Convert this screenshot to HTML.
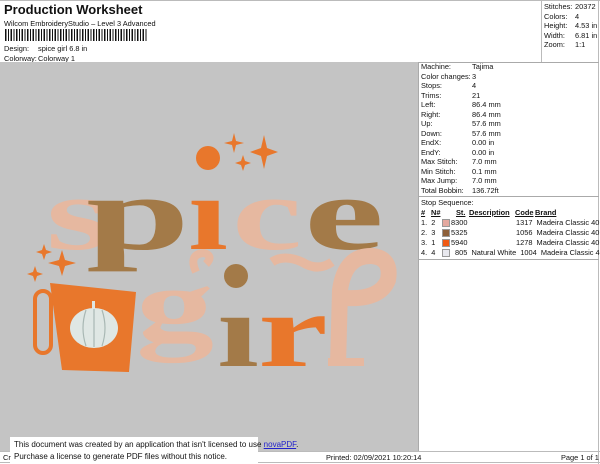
<!DOCTYPE html>
<html><head><style>
body{margin:0;width:600px;height:464px;overflow:hidden;background:#fff;font-family:"Liberation Sans",Arial,sans-serif;position:relative;color:#111}
.a{position:absolute;white-space:nowrap}
.s{font-size:7.4px}
.t{position:absolute;font-size:7.4px;line-height:9.5px;white-space:nowrap}
</style></head><body>
<div class="a" style="left:4px;top:2px;font-size:13px;font-weight:bold">Production Worksheet</div>
<div class="a s" style="left:4px;top:19px">Wilcom EmbroideryStudio – Level 3 Advanced</div>
<div class="a" style="left:5px;top:29px;width:142px;height:12px;background:repeating-linear-gradient(90deg,#111 0 1.5px,#fff 1.5px 3px,#111 3px 4px,#fff 4px 5.5px)"></div>
<div class="a s" style="left:4px;top:44px">Design:</div><div class="a s" style="left:38px;top:44px">spice girl 6.8 in</div>
<div class="a s" style="left:4px;top:54px">Colorway:</div><div class="a s" style="left:38px;top:54px">Colorway 1</div>
<div class="a" style="left:0;top:0;width:600px;height:1px;background:#bbb"></div>
<div class="a" style="left:598px;top:0;width:1px;height:464px;background:#bbb"></div>
<div class="a" style="left:541px;top:0;width:1px;height:62px;background:#bbb"></div>
<div class="a" style="left:0;top:62px;width:418px;height:389px;background:#c4c4c4"></div>
<div class="a" style="left:418px;top:62px;width:1px;height:389px;background:#aaa"></div>
<div class="a" style="left:418px;top:62px;width:181px;height:1px;background:#aaa"></div>
<div class="a" style="left:418px;top:196px;width:181px;height:1px;background:#aaa"></div>
<div class="a" style="left:418px;top:259px;width:181px;height:1px;background:#aaa"></div>
<div class="a" style="left:0;top:451px;width:600px;height:1px;background:#bbb"></div>
<div class="a" style="left:0;top:462px;width:600px;height:1px;background:#bbb"></div>

<div class="t" style="left:544px;top:2px">Stitches:<br>Colors:<br>Height:<br>Width:<br>Zoom:</div>
<div class="t" style="left:575px;top:2px">20372<br>4<br>4.53 in<br>6.81 in<br>1:1</div>

<div class="t" style="left:421px;top:62px">Machine:<br>Color changes:<br>Stops:<br>Trims:<br>Left:<br>Right:<br>Up:<br>Down:<br>EndX:<br>EndY:<br>Max Stitch:<br>Min Stitch:<br>Max Jump:<br>Total Bobbin:</div>
<div class="t" style="left:472px;top:62px">Tajima<br>3<br>4<br>21<br>86.4 mm<br>86.4 mm<br>57.6 mm<br>57.6 mm<br>0.00 in<br>0.00 in<br>7.0 mm<br>0.1 mm<br>7.0 mm<br>136.72ft</div>

<div class="a s" style="left:421px;top:198px">Stop Sequence:</div>
<div class="a s" style="left:421px;top:208px;font-weight:bold;text-decoration:underline">#</div>
<div class="a s" style="left:431px;top:208px;font-weight:bold;text-decoration:underline">N#</div>
<div class="a s" style="left:456px;top:208px;font-weight:bold;text-decoration:underline">St.</div>
<div class="a s" style="left:469px;top:208px;font-weight:bold;text-decoration:underline">Description</div>
<div class="a s" style="left:515px;top:208px;font-weight:bold;text-decoration:underline">Code</div>
<div class="a s" style="left:535px;top:208px;font-weight:bold;text-decoration:underline">Brand</div>
<div class="a s" style="left:421px;top:218px">1.&nbsp; 2</div><div class="a" style="left:442px;top:219px;width:6px;height:6px;background:#e4a9a0;border:1px solid #999"></div><div class="a s" style="left:451px;top:218px">8300</div><div class="a s" style="left:516px;top:218px">1317&nbsp; Madeira Classic 40</div>
<div class="a s" style="left:421px;top:228px">2.&nbsp; 3</div><div class="a" style="left:442px;top:229px;width:6px;height:6px;background:#8c5f3a;border:1px solid #999"></div><div class="a s" style="left:451px;top:228px">5325</div><div class="a s" style="left:516px;top:228px">1056&nbsp; Madeira Classic 40</div>
<div class="a s" style="left:421px;top:238px">3.&nbsp; 1</div><div class="a" style="left:442px;top:239px;width:6px;height:6px;background:#f05a14;border:1px solid #999"></div><div class="a s" style="left:451px;top:238px">5940</div><div class="a s" style="left:516px;top:238px">1278&nbsp; Madeira Classic 40</div>
<div class="a s" style="left:421px;top:248px">4.&nbsp; 4</div><div class="a" style="left:442px;top:249px;width:6px;height:6px;background:#e8e8ee;border:1px solid #999"></div><div class="a s" style="left:455px;top:248px">805&nbsp; Natural White&nbsp; 1004&nbsp; Madeira Classic 40</div>

<svg class="a" style="left:0;top:62px" width="418" height="389" viewBox="0 62 418 389">
<g fill="#e8772c">
<path d="M234 133 l2 8 8 2 -8 2 -2 8 -2 -8 -8 -2 8 -2z"/>
<path d="M264 135 l3 13 11 4 -11 4 -3 13 -3 -13 -11 -4 11 -4z"/>
<path d="M243 155 l2 6 6 2 -6 2 -2 6 -2 -6 -6 -2 6 -2z"/>
<path d="M44 244 l2 6 6 2 -6 2 -2 6 -2 -6 -6 -2 6 -2z"/>
<path d="M62 250 l3 10 11 3 -11 3 -3 10 -3 -10 -11 -3 11 -3z"/>
<path d="M35 266 l2 6 6 2 -6 2 -2 6 -2 -6 -6 -2 6 -2z"/>
<circle cx="208" cy="158" r="12"/>
<rect x="35" y="291" width="16" height="62" rx="8" fill="none" stroke="#e8772c" stroke-width="4"/>
<path d="M50 283 L136 292 L129 372 L62 370 Z"/>
</g>
<ellipse cx="94" cy="328" rx="24" ry="20" fill="#dfe7e4"/>
<g stroke="#a9b8b4" stroke-width="1.2" fill="none"><path d="M86 310 Q80 328 86 346"/><path d="M102 310 Q108 328 102 346"/><path d="M94 309 V347"/></g>
<rect x="92" y="301" width="3" height="8" fill="#dfe7e4"/>
<circle cx="236" cy="276" r="12" fill="#a37a48"/>
<g font-family="Liberation Serif,serif" font-weight="bold">
<text x="46" y="249" font-size="105" fill="#e6b8a0" textLength="64" lengthAdjust="spacingAndGlyphs">s</text>
<text x="86" y="249" font-size="105" fill="#a37a48" textLength="104" lengthAdjust="spacingAndGlyphs">p</text>
<text x="188" y="249" font-size="105" fill="#e8772c" textLength="40" lengthAdjust="spacingAndGlyphs">ı</text>
<text x="232" y="249" font-size="105" fill="#e6b8a0" textLength="70" lengthAdjust="spacingAndGlyphs">c</text>
<text x="304" y="249" font-size="105" fill="#a37a48" textLength="80" lengthAdjust="spacingAndGlyphs">e</text>
<text x="136" y="340" font-size="105" fill="#e6b8a0" textLength="78" lengthAdjust="spacingAndGlyphs">g</text>
<text x="217" y="366" font-size="105" fill="#a37a48" textLength="42" lengthAdjust="spacingAndGlyphs">ı</text>
<text x="258" y="366" font-size="105" fill="#e8772c" textLength="70" lengthAdjust="spacingAndGlyphs">r</text>
</g>
<path d="M338 365 L340 290 Q345 255 372 256 Q392 258 388 280 Q380 300 345 298" fill="none" stroke="#e6b8a0" stroke-width="16"/>
<rect x="328" y="358" width="36" height="8" fill="#e6b8a0"/>
<path d="M196 272 Q188 254 204 253 Q214 256 206 264" fill="none" stroke="#e6b8a0" stroke-width="8"/>
<path d="M272 262 Q284 254 302 262 Q318 272 332 262" fill="none" stroke="#e6b8a0" stroke-width="9"/>
</svg>

<div class="a" style="left:10px;top:437px;width:248px;height:27px;background:#fff"></div>
<div class="a" style="left:14px;top:440px;font-size:8px">This document was created by an application that isn't licensed to use <span style="color:#22c;text-decoration:underline">novaPDF</span>.</div>
<div class="a" style="left:14px;top:452px;font-size:8px">Purchase a license to generate PDF files without this notice.</div>
<div class="a s" style="left:3px;top:453px">Cr</div>
<div class="a s" style="left:326px;top:453px">Printed: 02/09/2021 10:20:14</div>
<div class="a s" style="left:561px;top:453px">Page 1 of 1</div>
</body></html>
